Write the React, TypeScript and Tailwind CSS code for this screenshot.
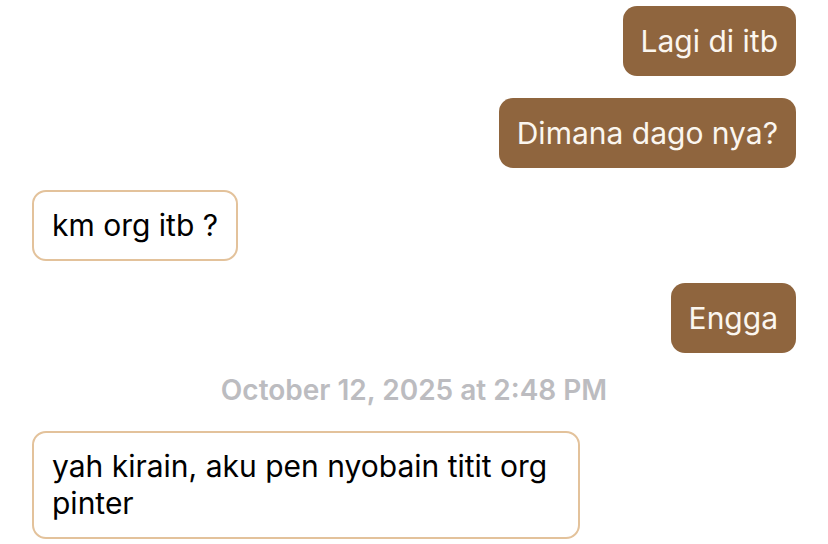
const messages = [
  { id: 1, mine: true, text: 'Lagi di itb' },
  { id: 2, mine: true, text: 'Dimana dago nya?' },
  { id: 3, mine: false, text: 'km org itb ?' },
  { id: 4, mine: true, text: 'Engga' },
]

function Bubble({ mine, text }: { mine: boolean; text: string }) {
  return (
    <div className={`flex ${mine ? 'justify-end' : 'justify-start'}`}>
      <div
        className={`max-w-[548px] rounded-[14px] px-[18px] text-[30px] leading-[37px] ${
          mine
            ? 'bg-[#8f653e] text-[#fbf6ef] py-[16.5px]'
            : 'bg-white text-black border-2 border-[#e3c29b] py-[15px] px-[16px]'
        }`}
      >
        {text}
      </div>
    </div>
  )
}

export default function App() {
  return (
    <div className="w-[828px] h-[544px] overflow-hidden bg-white px-8 pt-[6px] font-['Inter',sans-serif]">
      <div className="flex flex-col gap-[22px]">
        {messages.map((m) => (
          <Bubble key={m.id} mine={m.mine} text={m.text} />
        ))}
      </div>
      <p className="mt-[22px] mb-[26px] text-center text-[28px] leading-[30px] font-semibold text-[#bcbcc0]">
        October 12, 2025 at 2:48 PM
      </p>
      <Bubble mine={false} text="yah kirain, aku pen nyobain titit org pinter" />
    </div>
  )
}
